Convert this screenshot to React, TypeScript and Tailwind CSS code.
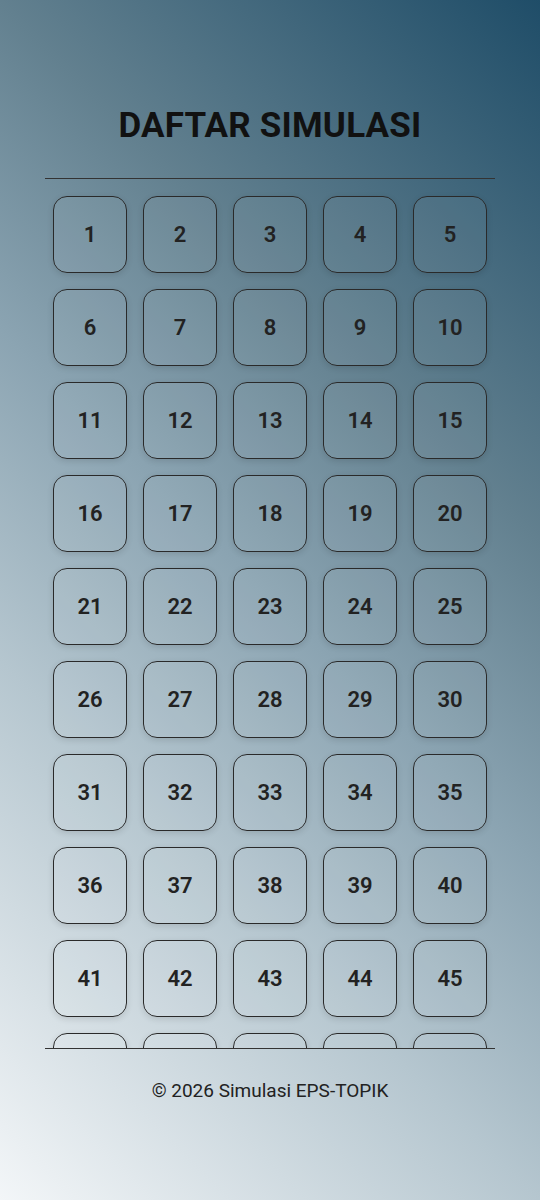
import React from "react";

export default function App() {
  const items = Array.from({ length: 50 }, (_, i) => i + 1);
  return (
    <div
      className="w-[540px] h-[1200px] flex flex-col items-center bg-[linear-gradient(45deg,#f3f6f8_0%,#b5c6cf_31%,#8ba4b2_50%,#62808f_69%,#1f4d68_100%)]"
      style={{ fontFamily: "Roboto, 'Noto Sans', sans-serif" }}
    >
      <h1 className="mt-[104px] text-[35px] leading-[44px] font-bold text-[#111] tracking-[0.2px]">
        DAFTAR SIMULASI
      </h1>
      <div className="mt-[30px] w-[450px] h-[871px] border-y border-[#333] overflow-hidden">
        <div className="grid grid-cols-5 gap-x-4 gap-y-4 px-2 pt-[17px]">
          {items.map((n) => (
            <div
              key={n}
              className="h-[77px] rounded-[14px] border-[1.5px] border-[#2a2a2a] bg-white/5 shadow-[0_2px_6px_rgba(0,0,0,0.12)] flex items-center justify-center text-[22px] font-semibold text-[#222]"
            >
              {n}
            </div>
          ))}
        </div>
      </div>
      <p className="mt-[28px] text-[19px] text-[#222]">© 2026 Simulasi EPS-TOPIK</p>
    </div>
  );
}
